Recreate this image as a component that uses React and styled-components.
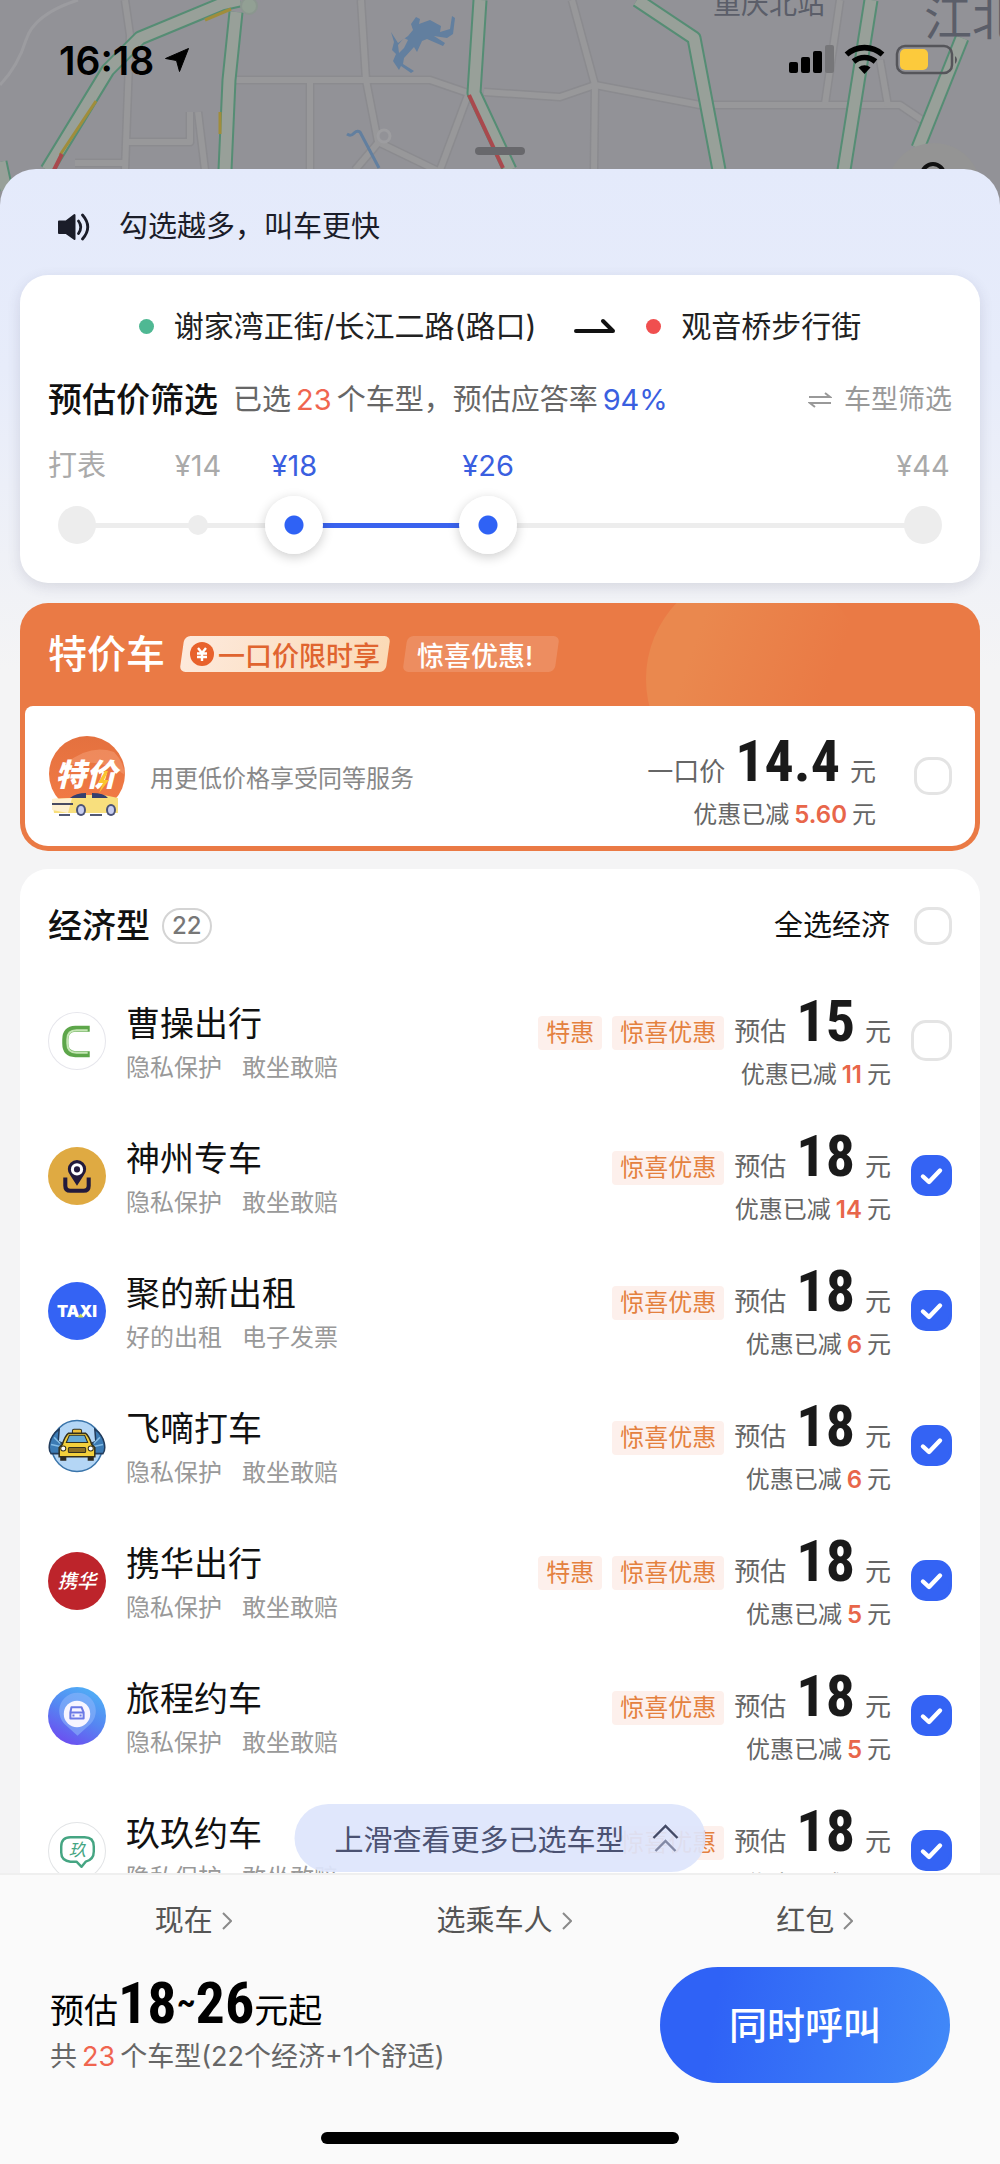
import React, {useState} from 'react';
import styled, {createGlobalStyle} from 'styled-components';

const carList = [
    {id: 'caocao', name: '曹操出行', perks: ['隐私保护', '敢坐敢赔'], tags: ['特惠', '惊喜优惠'], price: 15, discount: 11, logo: CaocaoLogo},
    {id: 'shenzhou', name: '神州专车', perks: ['隐私保护', '敢坐敢赔'], tags: ['惊喜优惠'], price: 18, discount: 14, logo: ShenzhouLogo},
    {id: 'jude', name: '聚的新出租', perks: ['好的出租', '电子发票'], tags: ['惊喜优惠'], price: 18, discount: 6, logo: TaxiLogo},
    {id: 'feidi', name: '飞嘀打车', perks: ['隐私保护', '敢坐敢赔'], tags: ['惊喜优惠'], price: 18, discount: 6, logo: FeidiLogo},
    {id: 'xiehua', name: '携华出行', perks: ['隐私保护', '敢坐敢赔'], tags: ['特惠', '惊喜优惠'], price: 18, discount: 5, logo: XiehuaLogo},
    {id: 'lvcheng', name: '旅程约车', perks: ['隐私保护', '敢坐敢赔'], tags: ['惊喜优惠'], price: 18, discount: 5, logo: LvchengLogo},
    {id: 'jiujiu', name: '玖玖约车', perks: ['隐私保护', '敢坐敢赔'], tags: ['惊喜优惠'], price: 18, discount: 5, logo: JiujiuLogo},
];

// 滑块刻度，at 为千分比位置
const stops = [
    {label: '打表', at: 0, size: 38},
    {label: '¥14', at: 143, size: 20},
    {label: '¥18', at: 257, active: true},
    {label: '¥26', at: 486, active: true},
    {label: '¥44', at: 1000, size: 38},
];

function App() {
    const [low, setLow] = useState(257);
    const [high, setHigh] = useState(486);
    const [special, setSpecial] = useState(false);
    const [all, setAll] = useState(false);
    const [checked, setChecked] = useState(carList.slice(1).map((car) => car.id));

    const toggleCar = (id) => {
        setChecked((prev) => (prev.includes(id) ? prev.filter((v) => v !== id) : [...prev, id]));
    };

    const toggleAll = () => {
        setChecked(all ? [] : carList.map((car) => car.id));
        setAll(!all);
    };

    return (
        <Page>
            <GlobalStyle />
            <MapHeader>
                <MapDrawing />
                <StatusBar>
                    <Clock>16:18</Clock>
                    <LocationIcon />
                    <StatusIcons />
                </StatusBar>
                <Grabber />
            </MapHeader>
            <Sheet>
                <Notice>
                    <SpeakerIcon />
                    勾选越多，叫车更快
                </Notice>

                <FilterCard>
                    <Route>
                        <Place $color="#4fb893">谢家湾正街/长江二路(路口)</Place>
                        <RouteArrow />
                        <Place $color="#f04f4f">观音桥步行街</Place>
                    </Route>
                    <FilterHead>
                        <Title>预估价筛选</Title>
                        <FilterText>
                            已选<Red>23</Red>个车型，预估应答率<Blue>94%</Blue>
                        </FilterText>
                        <FilterButton type="button">
                            <SwapIcon />
                            车型筛选
                        </FilterButton>
                    </FilterHead>
                    <Scale>
                        {stops.map((stop) => (
                            <ScaleLabel key={stop.label} $active={stop.active} style={{left: `${stop.at / 10}%`}}>
                                {stop.label}
                            </ScaleLabel>
                        ))}
                    </Scale>
                    <Slider>
                        <Rail>
                            {stops.filter((stop) => stop.size).map((stop) => (
                                <Stop key={stop.label} $size={stop.size} style={{left: `${stop.at / 10}%`}} />
                            ))}
                            <Range style={{left: `${low / 10}%`, width: `${(high - low) / 10}%`}} />
                        </Rail>
                        <Thumb
                            type="range"
                            min="0"
                            max="1000"
                            aria-label="最低价"
                            value={low}
                            onChange={(e) => setLow(Math.min(Number(e.target.value), high))}
                        />
                        <Thumb
                            type="range"
                            min="0"
                            max="1000"
                            aria-label="最高价"
                            value={high}
                            onChange={(e) => setHigh(Math.max(Number(e.target.value), low))}
                        />
                    </Slider>
                </FilterCard>

                <SpecialCard>
                    <SpecialHead>
                        <SpecialTitle>特价车</SpecialTitle>
                        <Ribbon $solid>
                            <YuanIcon />
                            一口价限时享
                        </Ribbon>
                        <Ribbon>惊喜优惠!</Ribbon>
                    </SpecialHead>
                    <SpecialBody>
                        <SpecialLogo />
                        <SpecialText>用更低价格享受同等服务</SpecialText>
                        <Price label="一口价" price="14.4" discount="5.60" $top={10} />
                        <Check checked={special} onChange={() => setSpecial(!special)} $gap={38} />
                    </SpecialBody>
                </SpecialCard>

                <GroupCard>
                    <GroupHead>
                        <Title>经济型</Title>
                        <Count>22</Count>
                        <AllText>全选经济</AllText>
                        <Check checked={all} onChange={toggleAll} $gap={24} />
                    </GroupHead>
                    {carList.map((car) => (
                        <CarRow key={car.id}>
                            <car.logo />
                            <CarInfo>
                                <CarName>{car.name}</CarName>
                                <Perks>
                                    {car.perks.map((perk) => <span key={perk}>{perk}</span>)}
                                </Perks>
                            </CarInfo>
                            <Price label="预估" tags={car.tags} price={car.price} discount={car.discount} />
                            <Check
                                checked={checked.includes(car.id)}
                                onChange={() => toggleCar(car.id)}
                                $size={41}
                                $gap={20}
                            />
                        </CarRow>
                    ))}
                </GroupCard>
                <MoreButton type="button">
                    上滑查看更多已选车型
                    <DoubleUpIcon />
                </MoreButton>
            </Sheet>

            <Footer>
                <Options>
                    {['现在', '选乘车人', '红包'].map((option) => (
                        <Option type="button" key={option}>
                            {option}
                            <ChevronIcon />
                        </Option>
                    ))}
                </Options>
                <CallRow>
                    <div>
                        <Total>
                            预估<TotalPrice>18<Tilde>~</Tilde>26</TotalPrice>元起
                        </Total>
                        <TotalText>
                            共<Red>23</Red>个车型(22个经济+1个舒适)
                        </TotalText>
                    </div>
                    <CallButton type="button">同时呼叫</CallButton>
                </CallRow>
                <HomeBar />
            </Footer>
        </Page>
    );
}

export default App;

function Price({label, tags = [], price, discount, $top = 0}) {
    return (
        <PriceBox $top={$top}>
            <PriceLine>
                {tags.map((tag) => <Tag key={tag}>{tag}</Tag>)}
                <span>{label}</span>
                <Amount>{price}</Amount>
                <span>元</span>
            </PriceLine>
            <Discount>
                优惠已减<DiscountAmount>{discount}</DiscountAmount>元
            </Discount>
        </PriceBox>
    );
}

function Check({checked, onChange, $size = 38, $gap}) {
    return (
        <CheckBox $size={$size} $gap={$gap}>
            <CheckInput type="checkbox" checked={checked} onChange={onChange} />
            {checked && (
                <svg viewBox="0 0 41 41">
                    <path d="M12 21.5l6 5.5 11-11.5" fill="none" stroke="#fff" strokeWidth="4.4" strokeLinecap="round" strokeLinejoin="round" />
                </svg>
            )}
        </CheckBox>
    );
}

function MapDrawing() {
    const roads = [
        'M125 0L130 35L125 170', 'M236 80H430L468 93', 'M361 0L366 80L378 142L440 172', 'M310 82V170',
        'M468 95L440 170', 'M484 92L560 97L595 85L700 105H900L922 120', 'M572 0L595 85L594 170',
        'M840 0L825 104', 'M880 60L888 106', 'M128 142H190V112', 'M198 112L205 170', 'M75 163H125', 'M378 143L355 170',
    ];
    const highways = [
        'M47 170L108 70L140 38L222 4L240 0', 'M225 170L229 80L236 12', 'M480 0L474 93L510 170',
        'M637 0L694 38L719 170', 'M871 0L844 170', 'M962 38L918 148', 'M0 162L6 190',
    ];
    return (
        <MapSvg viewBox="0 0 1000 206" preserveAspectRatio="xMidYMin slice">
            <rect width="1000" height="206" fill="#929297" />
            <path d="M0 85Q18 66 26 40T78 0" fill="none" stroke="#9c9ca0" strokeWidth="3" />
            <g fill="none" strokeLinejoin="round">
                {roads.map((d) => <path key={d} d={d} stroke="#8b8b8f" strokeWidth="9" />)}
                {roads.map((d) => <path key={d} d={d} stroke="#98989a" strokeWidth="6" />)}
                {highways.map((d) => <path key={d} d={d} stroke="#558d74" strokeWidth="15" />)}
                {highways.map((d) => <path key={d} d={d} stroke="#98a099" strokeWidth="11" />)}
                <path d="M60 155L96 101M205 20L231 9M220 112V134" stroke="#a08d3b" strokeWidth="3" />
                <path d="M54 170L62 154" stroke="#a9494d" strokeWidth="4" />
                <path d="M469 95L503 168" stroke="#a9494d" strokeWidth="4" />
                <path d="M347 134C354 139 354 128 360 132L379 168" stroke="#627f9f" strokeWidth="3" />
            </g>
            <circle cx="249" cy="6" r="8" fill="#92a094" stroke="#8b968f" strokeWidth="2" />
            <circle cx="384" cy="136" r="6" fill="#929297" stroke="#9d9da0" strokeWidth="3" />
            <path
                d="M391 32L398 43L408 36L413 30L411 24L416 17L420 19L419 24L430 20L441 26L440 32L450 29L452 16L455 18L453 34L447 38L434 36L445 43L443 46L427 39L422 41L417 52L414 47L404 58L403 64L414 71L411 73L401 66L399 70L393 61L396 54L392 50L394 42Z"
                fill="#627f9f"
            />
            <path d="M398 45L404 38L408 40L404 48L399 53Z" fill="#929297" />
            <MapText x="713" y="14" fontSize="28">重庆北站</MapText>
            <MapText x="924" y="35" fontSize="48">江北</MapText>
            <circle cx="934" cy="190" r="47" fill="#949494" />
            <circle cx="933" cy="175" r="11" fill="none" stroke="#111" strokeWidth="4" />
        </MapSvg>
    );
}

function LocationIcon() {
    return (
        <svg width="26" height="26" viewBox="0 0 26 26">
            <path d="M24.5 1.5L1.5 11.5L12.5 13.5L15.5 24.5Z" fill="#000" stroke="#000" strokeLinejoin="round" />
        </svg>
    );
}

function StatusIcons() {
    return (
        <StatusSvg width="172" height="32" viewBox="0 0 172 32">
            <rect x="1" y="18" width="9" height="11" rx="2" />
            <rect x="13" y="13" width="9" height="16" rx="2" />
            <rect x="25" y="7" width="9" height="22" rx="2" />
            <rect x="37" y="1" width="9" height="28" rx="2" fill="#767679" />
            <g fill="none" stroke="#000" strokeWidth="5.6">
                <path d="M58.5 10.5A27 27 0 0 1 94.5 10.5" />
                <path d="M65.5 17.5A17 17 0 0 1 87.5 17.5" />
            </g>
            <path d="M76.5 30L70.5 23.5A9 9 0 0 1 82.5 23.5Z" />
            <rect x="109" y="2" width="55" height="27" rx="8" fill="none" stroke="#55555a" strokeWidth="2.5" />
            <rect x="112" y="5" width="28" height="21" rx="5" fill="#fcca3c" />
            <path d="M167 12Q171 15.5 167 20Z" fill="#55555a" />
        </StatusSvg>
    );
}

function SpeakerIcon() {
    return (
        <svg width="32" height="30" viewBox="0 0 32 30">
            <path d="M1 9.5H8L16.5 3V27L8 21H1Z" fill="#1b1d29" stroke="#1b1d29" strokeWidth="2" strokeLinejoin="round" />
            <path d="M20.5 9Q25 15 20.5 21.5M24.500 3Q35 15 24.500 27" fill="none" stroke="#1b1d29" strokeWidth="2.8" strokeLinecap="round" />
        </svg>
    );
}

function RouteArrow() {
    return (
        <ArrowSvg width="42" height="18" viewBox="0 0 42 18">
            <path d="M2 14H39L29 4" fill="none" stroke="#111" strokeWidth="4" strokeLinecap="round" strokeLinejoin="round" />
        </ArrowSvg>
    );
}

function SwapIcon() {
    return (
        <svg width="24" height="18" viewBox="0 0 24 18">
            <path d="M1 6H22L17 2M23 12H2L7 16" fill="none" stroke="#999" strokeWidth="2" />
        </svg>
    );
}

function YuanIcon() {
    return (
        <svg width="24" height="24" viewBox="0 0 24 24">
            <circle cx="12" cy="12" r="12" fill="#e8622c" />
            <path d="M8 6L12 11L16 6M7 11.5H17M7 15H17M12 11V19" fill="none" stroke="#fff" strokeWidth="2.4" />
        </svg>
    );
}

function DoubleUpIcon() {
    return (
        <svg width="28" height="30" viewBox="0 0 28 30" fill="none" strokeWidth="2.4">
            <path d="M2 15L14 3L26 15" stroke="#434a66" />
            <path d="M4 28L14 18L24 28" stroke="#8289a5" />
        </svg>
    );
}

function ChevronIcon() {
    return (
        <svg width="10" height="18" viewBox="0 0 10 18">
            <path d="M1 1L9 9L1 17" fill="none" stroke="#8a8a8a" strokeWidth="2" />
        </svg>
    );
}

function SpecialLogo() {
    return (
        <svg width="78" height="82" viewBox="0 0 78 82">
            <defs>
                <linearGradient id="specialBall" x1="0" y1="0" x2="0" y2="1">
                    <stop offset="0" stopColor="#e4713f" />
                    <stop offset="1" stopColor="#f37b45" />
                </linearGradient>
            </defs>
            <circle cx="39" cy="39" r="38" fill="url(#specialBall)" />
            <path d="M14 32Q40 8 66 17A38 38 0 0 1 77 40Q50 20 14 32Z" fill="#f39a70" opacity="0.6" />
            <path d="M0 66H78V82H0Z" fill="#fff" />
            <LogoText x="38" y="51" fontSize="31" fontWeight="900" fontStyle="italic" fill="#fff">特价</LogoText>
            <path d="M57 36L50 48H55L51 58L61 45H56L60 36Z" fill="#fbc52f" />
            <path d="M4 64L24 63L30 60H46L56 60L70 63V78H6Z" fill="#f8df7d" />
            <path d="M4 64L24 63L20 78L4 75Z" fill="#fff0d0" />
            <path d="M22 63Q28 58 38 58V63ZM44 63V58Q56 58 60 63Z" fill="#34406f" />
            <path d="M4 69H25" stroke="#4a4b62" strokeWidth="2" />
            <ellipse cx="33" cy="75" rx="5" ry="6" fill="#4b5377" />
            <ellipse cx="33" cy="75" rx="3" ry="4" fill="#c7cdf0" />
            <ellipse cx="63" cy="75" rx="5" ry="6" fill="#4b5377" />
            <ellipse cx="63" cy="75" rx="3" ry="4" fill="#c7cdf0" />
            <path d="M11 80H22M42 80H54" stroke="#545a75" strokeWidth="2" />
        </svg>
    );
}

function CaocaoLogo() {
    return (
        <Logo viewBox="0 0 57 57">
            <circle cx="28.5" cy="28.5" r="28" fill="#fff" stroke="#e6e6ec" />
            <path d="M41 16.500H27Q17 17 17 27V31Q17 41 27 41.500H41" fill="none" stroke="#5da64a" strokeWidth="6" />
            <path d="M39 18H28Q19 18 19 27V31Q19 40 28 40H39" fill="none" stroke="#c4e6b4" strokeWidth="2" />
        </Logo>
    );
}

function ShenzhouLogo() {
    return (
        <Logo viewBox="0 0 57 57">
            <circle cx="28.5" cy="28.5" r="28.5" fill="#dfaa42" />
            <path d="M17 30V38Q17 43 22 43H35Q40 43 40 38V30" fill="none" stroke="#221a3c" strokeWidth="4" />
            <path d="M28.5 38L22 28A9 9 0 1 1 35 28Z" fill="#221a3c" />
            <circle cx="28.5" cy="22" r="6" fill="#fff" />
            <circle cx="28.5" cy="22" r="3" fill="#221a3c" />
        </Logo>
    );
}

function TaxiLogo() {
    return (
        <Logo viewBox="0 0 57 57">
            <circle cx="28.5" cy="28.5" r="28.5" fill="#3463f4" />
            <LogoText x="28.5" y="34" fontSize="16" fontWeight="900" fill="#fff">TAXI</LogoText>
            <path d="M29 35L32 31L35 35Z" fill="#c4d94e" />
        </Logo>
    );
}

function FeidiLogo() {
    return (
        <Logo viewBox="0 0 57 57">
            <circle cx="28.5" cy="28.5" r="25" fill="#b4d6f5" stroke="#3a75ab" strokeWidth="1.5" />
            <path d="M11 12C0 20 0 32 3 36H14L17 27L10 24ZM46 12C57 20 57 32 54 36H43L40 27L47 24Z" fill="#3c7bb4" stroke="#223c5c" strokeWidth="1.5" />
            <path d="M3 27L12 29M6 20L12 26M54 27L45 29M51 20L45 26" stroke="#83bce6" strokeWidth="1.5" />
            <rect x="24" y="12" width="9" height="5" rx="1.5" fill="#eec13a" stroke="#33301e" />
            <path d="M20 16H37Q40 18 43 27L46 30V39H11V30L14 27Q17 18 20 16Z" fill="#f3d03c" stroke="#33301e" strokeWidth="1.5" />
            <path d="M21 18H36L39 25H18Z" fill="#66abd6" stroke="#33301e" />
            <rect x="20" y="30" width="17" height="5" rx="1" fill="#8b6f23" stroke="#33301e" />
            <circle cx="15" cy="31" r="2.5" fill="#fff" stroke="#33301e" />
            <circle cx="42" cy="31" r="2.5" fill="#fff" stroke="#33301e" />
            <path d="M12 39H18V43H12ZM39 39H45V43H39Z" fill="#2c2a20" />
        </Logo>
    );
}

function XiehuaLogo() {
    return (
        <Logo viewBox="0 0 57 57">
            <circle cx="28.5" cy="28.5" r="28.5" fill="#bd242b" />
            <LogoText x="28.5" y="35" fontSize="19" fontWeight="500" fontStyle="italic" fill="#fff">携华</LogoText>
        </Logo>
    );
}

function LvchengLogo() {
    return (
        <Logo viewBox="0 0 57 57">
            <defs>
                <linearGradient id="lvchengBg" x1="0.8" y1="0" x2="0.3" y2="1">
                    <stop offset="0" stopColor="#4fb2f6" />
                    <stop offset="0.5" stopColor="#5587f2" />
                    <stop offset="1" stopColor="#6c4df0" />
                </linearGradient>
            </defs>
            <circle cx="28.5" cy="28.5" r="28.5" fill="url(#lvchengBg)" />
            <path d="M29 48L16 36A18 18 0 1 1 42 36Z" fill="#8cb4fa" opacity="0.6" />
            <circle cx="28.5" cy="26.5" r="13" fill="#f7f5ff" />
            <path d="M23 20H33L35 25V31H22V25Z" fill="none" stroke="#6b7ae6" strokeWidth="2" strokeLinejoin="round" />
            <path d="M22 25H35M24 28H26M31 28H33" stroke="#6b7ae6" strokeWidth="2" />
        </Logo>
    );
}

function JiujiuLogo() {
    return (
        <Logo viewBox="0 0 57 57">
            <circle cx="28.5" cy="28.5" r="28" fill="#fff" stroke="#e2e4e6" />
            <path d="M22 15H36Q45 15 45 24V29Q45 37 37 39L33 44L28 39H22Q13 38 13 30V24Q13 15 22 15Z" fill="none" stroke="#45a582" strokeWidth="2.4" strokeLinejoin="round" />
            <LogoText x="29" y="33" fontSize="17" fontWeight="400" fontStyle="italic" fill="#45a582">玖</LogoText>
        </Logo>
    );
}

const GlobalStyle = createGlobalStyle`
    * {
        box-sizing: border-box;
    }
    body {
        margin: 0;
        background: #f4f4f5;
        color: #111;
        font-family: Inter, "Noto Sans CJK SC", sans-serif;
    }
    button {
        border: none;
        background: none;
        padding: 0;
        font: inherit;
        color: inherit;
        cursor: pointer;
    }
    svg {
        flex-shrink: 0;
    }
`;

const Page = styled.div`
    display: flex;
    flex-direction: column;
    height: 100vh;
    overflow: hidden;
`;

const MapHeader = styled.header`
    position: relative;
    flex-shrink: 0;
    height: 206px;
    background: #929297;
`;

const MapSvg = styled.svg`
    position: absolute;
    width: 100%;
    height: 100%;
`;

const MapText = styled.text`
    font-family: "Noto Sans CJK SC", sans-serif;
    fill: #5b5e69;
`;

const LogoText = styled.text`
    font-family: Inter, "Noto Sans CJK SC", sans-serif;
    text-anchor: middle;
`;

const StatusBar = styled.div`
    position: relative;
    display: flex;
    align-items: center;
    gap: 10px;
    height: 120px;
    padding: 0 40px 0 59px;
`;

const Clock = styled.span`
    font-size: 39px;
    font-weight: 600;
    color: #000;
`;

const StatusSvg = styled.svg`
    margin-left: auto;
`;

const Grabber = styled.div`
    position: relative;
    width: 50px;
    height: 8px;
    margin: 27px auto 0;
    border-radius: 4px;
    background: #68686c;
`;

const Sheet = styled.main`
    position: relative;
    flex: 1;
    min-height: 0;
    margin-top: -37px;
    padding: 0 20px;
    overflow: hidden;
    border-radius: 36px 36px 0 0;
    background: linear-gradient(#e4eafb, #e7ecfa 200px, #f4f4f5 500px);
`;

const Notice = styled.div`
    display: flex;
    align-items: center;
    gap: 29px;
    padding: 34px 38px 24px;
    font-size: 29px;
    line-height: 48px;
    color: #1b1d29;
`;

const FilterCard = styled.section`
    padding: 31px 28px 29px;
    border-radius: 28px;
    background: #fff;
    box-shadow: 0 4px 14px rgba(60, 60, 90, 0.14);
`;

const Route = styled.div`
    display: flex;
    justify-content: center;
    align-items: center;
    font-size: 30px;
    line-height: 40px;
    color: #222;
`;

const Place = styled.span`
    display: flex;
    align-items: center;
    gap: 20px;
    &::before {
        content: "";
        width: 15px;
        height: 15px;
        border-radius: 50%;
        background: ${(props) => props.$color};
    }
`;

const ArrowSvg = styled.svg`
    margin: 0 30px 0 38px;
`;

const FilterHead = styled.div`
    display: flex;
    align-items: center;
    margin-top: 34px;
    line-height: 40px;
`;

const Title = styled.h2`
    margin: 0;
    font-size: 34px;
    font-weight: 500;
    line-height: 40px;
`;

const FilterText = styled.span`
    margin-left: 15px;
    font-size: 29px;
    color: #666;
`;

const Red = styled.span`
    margin: 0 5px;
    color: #f0654f;
`;

const Blue = styled.span`
    margin-left: 5px;
    color: #3a5fe0;
`;

const FilterButton = styled.button`
    display: flex;
    align-items: center;
    gap: 12px;
    margin-left: auto;
    font-size: 27px;
    color: #999;
`;

const Scale = styled.div`
    position: relative;
    height: 40px;
    margin: 26px 29px 0;
    line-height: 40px;
`;

const ScaleLabel = styled.span`
    position: absolute;
    transform: translateX(-50%);
    font-size: 29px;
    white-space: nowrap;
    color: ${(props) => (props.$active ? '#3a5fe0' : '#aaa')};
`;

const Slider = styled.div`
    position: relative;
    display: grid;
    align-items: center;
    height: 58px;
    margin-top: 10px;
    & > * {
        grid-area: 1 / 1;
    }
`;

const Rail = styled.div`
    position: relative;
    height: 5px;
    margin: 0 29px;
    background: #ededed;
`;

const Stop = styled.span`
    position: absolute;
    top: 50%;
    width: ${(props) => props.$size}px;
    height: ${(props) => props.$size}px;
    border-radius: 50%;
    transform: translate(-50%, -50%);
    background: #ededed;
`;

const Range = styled.span`
    position: absolute;
    height: 5px;
    background: #3a63ee;
`;

const Thumb = styled.input`
    position: relative;
    width: 100%;
    height: 58px;
    margin: 0;
    appearance: none;
    background: none;
    pointer-events: none;
    &::-webkit-slider-thumb {
        appearance: none;
        width: 58px;
        height: 58px;
        border-radius: 50%;
        background: radial-gradient(circle, #2f62f5 9px, #fff 10px);
        box-shadow: 0 3px 12px rgba(0, 0, 0, 0.2);
        pointer-events: auto;
    }
`;

const SpecialCard = styled.section`
    position: relative;
    margin-top: 20px;
    padding: 0 5px 5px;
    overflow: hidden;
    border-radius: 28px;
    background: #ea7a45;
    &::before {
        content: "";
        position: absolute;
        top: -34px;
        right: 114px;
        width: 220px;
        height: 220px;
        border-radius: 50%;
        background: linear-gradient(110deg, #ea884e 25%, #ea7a45 75%);
    }
`;

const SpecialHead = styled.div`
    position: relative;
    display: flex;
    align-items: center;
    gap: 17px;
    padding: 31px 23px 32px;
`;

const SpecialTitle = styled.h2`
    margin: 0;
    font-size: 39px;
    font-weight: 500;
    line-height: 40px;
    color: #fff;
`;

const Ribbon = styled.span`
    position: relative;
    z-index: 0;
    display: flex;
    align-items: center;
    gap: 4px;
    height: 36px;
    padding: ${(props) => (props.$solid ? '0 8px' : '0 24px 0 12px')};
    font-size: 27px;
    font-weight: 500;
    color: ${(props) => (props.$solid ? '#e0642f' : '#fff')};
    &::before {
        content: "";
        position: absolute;
        inset: 0;
        z-index: -1;
        border-radius: 6px;
        transform: skewX(-8deg);
        background: ${(props) => (props.$solid ? 'linear-gradient(110deg, #fdeadd, #fbd9b4)' : 'rgba(255, 255, 255, 0.15)')};
    }
`;

const SpecialBody = styled.label`
    position: relative;
    display: flex;
    align-items: center;
    padding: 15px 23px;
    border-radius: 8px 8px 23px 23px;
    background: #fff;
`;

const SpecialText = styled.span`
    margin-left: 24px;
    font-size: 24px;
    color: #888;
`;

const PriceBox = styled.div`
    margin-left: auto;
    padding-top: ${(props) => props.$top}px;
    text-align: right;
    color: #666;
`;

const PriceLine = styled.div`
    display: flex;
    justify-content: flex-end;
    align-items: baseline;
    gap: 10px;
    font-size: 26px;
    line-height: 34px;
`;

const Amount = styled.strong`
    font-family: "Roboto Condensed", Roboto, sans-serif;
    font-size: 58px;
    font-weight: 700;
    line-height: 60px;
    color: #1a1a1a;
`;

const Tag = styled.span`
    padding: 0 8px;
    border-radius: 4px;
    background: #fdf0ec;
    font-size: 24px;
    line-height: 34px;
    color: #e4813f;
`;

const Discount = styled.div`
    margin-top: 8px;
    font-size: 24px;
    line-height: 32px;
`;

const DiscountAmount = styled.span`
    margin: 0 5px;
    font-weight: 600;
    color: #e8664a;
`;

const CheckBox = styled.span`
    display: grid;
    flex-shrink: 0;
    width: ${(props) => props.$size}px;
    height: ${(props) => props.$size}px;
    margin-left: ${(props) => props.$gap}px;
    & > * {
        grid-area: 1 / 1;
    }
    svg {
        pointer-events: none;
        z-index: 1;
    }
`;

const CheckInput = styled.input`
    width: 100%;
    height: 100%;
    margin: 0;
    appearance: none;
    border: 3px solid #e4e4e4;
    border-radius: 15px;
    background: #fff;
    &:checked {
        border-color: #3463f4;
        background: #3463f4;
    }
`;

const GroupCard = styled.section`
    margin-top: 18px;
    border-radius: 28px 28px 0 0;
    background: #fff;
`;

const GroupHead = styled.label`
    display: flex;
    align-items: center;
    padding: 37px 28px 27px;
`;

const Count = styled.span`
    margin-left: 12px;
    padding: 0 8px;
    border: 2px solid #d4d4d4;
    border-radius: 18px;
    font-size: 24px;
    font-weight: 500;
    line-height: 32px;
    color: #777;
`;

const AllText = styled.span`
    margin-left: auto;
    font-size: 29px;
    line-height: 40px;
`;

const CarRow = styled.label`
    display: flex;
    align-items: center;
    height: 135px;
    padding: 0 28px;
`;

const Logo = styled.svg`
    width: 58px;
    height: 58px;
`;

const CarInfo = styled.div`
    display: flex;
    flex-direction: column;
    gap: 8px;
    margin-left: 20px;
    padding-top: 10px;
`;

const CarName = styled.span`
    font-size: 34px;
    line-height: 36px;
`;

const Perks = styled.span`
    display: flex;
    gap: 20px;
    font-size: 24px;
    line-height: 36px;
    color: #999;
`;

const MoreButton = styled.button`
    && {
        position: absolute;
        bottom: 1px;
        left: 50%;
        display: flex;
        align-items: center;
        gap: 27px;
        height: 68px;
        padding: 0 26px 0 40px;
        border-radius: 34px;
        transform: translateX(-50%);
        background: rgba(222, 229, 252, 0.93);
        font-size: 29px;
        color: #4b5272;
        white-space: nowrap;
    }
`;

const Footer = styled.footer`
    flex-shrink: 0;
    padding: 26px 50px 20px;
    border-top: 2px solid #efefef;
    background: #fafafa;
`;

const Options = styled.div`
    display: grid;
    grid-template-columns: repeat(3, 1fr);
    margin: 0 -20px 0 -12px;
`;

const Option = styled.button`
    display: flex;
    justify-content: center;
    align-items: center;
    gap: 9px;
    font-size: 29px;
    line-height: 40px;
    color: #555;
`;

const CallRow = styled.div`
    display: flex;
    justify-content: space-between;
    align-items: center;
    margin-top: 26px;
`;

const Total = styled.div`
    font-size: 34px;
    line-height: 56px;
    color: #000;
`;

const TotalPrice = styled.strong`
    font-family: "Roboto Condensed", "Liberation Sans Narrow", Roboto, sans-serif;
    font-size: 58px;
    font-weight: 700;
`;

const Tilde = styled.span`
    font-size: 34px;
    vertical-align: 10px;
    line-height: 1;
`;

const TotalText = styled.div`
    font-size: 27px;
    line-height: 36px;
    color: #666;
`;

const CallButton = styled.button`
    && {
        width: 290px;
        height: 116px;
        padding-bottom: 6px;
        border-radius: 58px;
        background: linear-gradient(100deg, #2f62f6 20%, #4189f8);
        font-size: 38px;
        font-weight: 500;
        color: #fff;
    }
`;

const HomeBar = styled.div`
    width: 358px;
    height: 12px;
    margin: 49px auto 0;
    border-radius: 6px;
    background: #000;
`;
